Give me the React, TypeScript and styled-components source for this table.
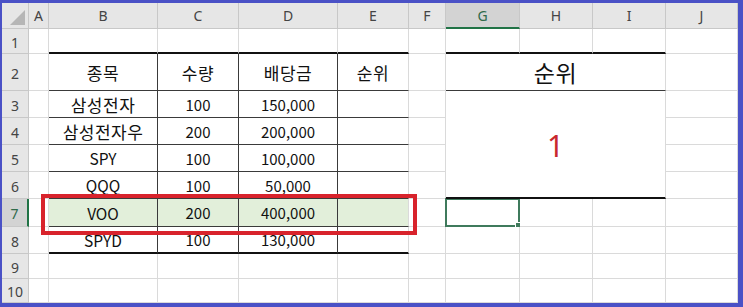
import React from 'react';
import styled, { createGlobalStyle } from 'styled-components';

const GlobalStyle = createGlobalStyle`
  html, body {
    margin: 0;
    padding: 0;
    background: #ffffff;
  }
  body {
    font-family: 'Noto Sans CJK KR', 'Noto Sans', sans-serif;
  }
`;

const COLS = [27, 20, 109, 81, 99, 71, 37, 74, 73, 73, 72];
const ROWS = [26, 25, 37, 27, 27, 27, 27, 28, 27, 25, 24];
const LETTERS = ['A', 'B', 'C', 'D', 'E', 'F', 'G', 'H', 'I', 'J'];

const GRID = '#dadada';
const THIN = '#3a3a3a';
const THICK = '2px solid #111';

const Frame = styled.div`
  width: 743px;
  height: 307px;
  box-sizing: border-box;
  border-style: solid;
  border-color: #4a51c6;
  border-width: 3px 5px 4px 2px;
  position: relative;
  overflow: hidden;
`;

const Sheet = styled.div`
  display: grid;
  grid-template-columns: ${COLS.map((c) => `${c}px`).join(' ')};
  grid-template-rows: ${ROWS.map((r) => `${r}px`).join(' ')};
  background: #fff;
`;

const Corner = styled.div`
  grid-column: 1;
  grid-row: 1;
  background: #e6e6e6;
  border-right: 1px solid #c8c8c8;
  border-bottom: 1px solid #c8c8c8;
  box-sizing: border-box;
  position: relative;
  &::after {
    content: '';
    position: absolute;
    right: 3px;
    bottom: 3px;
    width: 0;
    height: 0;
    border-left: 15px solid transparent;
    border-bottom: 15px solid #b6b6b6;
  }
`;

const ColHead = styled.div<{ $col: number; $active?: boolean }>`
  grid-column: ${(p) => p.$col};
  grid-row: 1;
  box-sizing: border-box;
  display: flex;
  align-items: center;
  justify-content: center;
  font-family: 'Noto Sans', sans-serif;
  font-size: 14px;
  color: ${(p) => (p.$active ? '#2f6a4a' : '#444')};
  background: ${(p) => (p.$active ? '#d3d3d3' : '#e6e6e6')};
  border-right: 1px solid #c8c8c8;
  border-bottom: ${(p) => (p.$active ? '2px solid #217346' : '1px solid #c8c8c8')};
`;

const RowHead = styled.div<{ $row: number; $active?: boolean }>`
  grid-column: 1;
  grid-row: ${(p) => p.$row};
  box-sizing: border-box;
  display: flex;
  align-items: center;
  justify-content: center;
  padding-top: 2px;
  font-family: 'Noto Sans', sans-serif;
  font-size: 14px;
  color: ${(p) => (p.$active ? '#2f6a4a' : '#444')};
  background: ${(p) => (p.$active ? '#d3d3d3' : '#e6e6e6')};
  border-bottom: 1px solid #c8c8c8;
  border-right: ${(p) => (p.$active ? '2px solid #217346' : '1px solid #c8c8c8')};
`;

const Cell = styled.div<{
  $col: number;
  $row: number;
  $span?: number;
  $rspan?: number;
  $bb?: string;
  $br?: string;
  $bg?: string;
}>`
  grid-column: ${(p) => p.$col} / span ${(p) => p.$span ?? 1};
  grid-row: ${(p) => p.$row} / span ${(p) => p.$rspan ?? 1};
  box-sizing: border-box;
  display: flex;
  align-items: center;
  justify-content: center;
  font-size: 15px;
  color: #111;
  background: ${(p) => p.$bg ?? '#fff'};
  border-right: ${(p) => p.$br ?? `1px solid ${GRID}`};
  border-bottom: ${(p) => p.$bb ?? `1px solid ${GRID}`};
  white-space: nowrap;
  position: relative;
`;

const Ko = styled.span<{ $size?: number }>`
  font-size: ${(p) => p.$size ?? 17}px;
  letter-spacing: 0.5px;
`;

const Latin = styled.span`
  font-size: 15.5px;
`;

const RankValue = styled.span`
  font-family: 'Noto Sans', sans-serif;
  font-size: 30px;
  color: #c8282e;
  margin-top: 2px;
`;

const Selection = styled.div`
  position: absolute;
  inset: -1px -1px -1px -1px;
  border: 2px solid #3f7a5c;
  pointer-events: none;
  &::after {
    content: '';
    position: absolute;
    right: -4px;
    bottom: -4px;
    width: 5px;
    height: 5px;
    background: #3f7a5c;
    border: 1px solid #fff;
  }
`;

const Highlight = styled.div`
  position: absolute;
  left: 39px;
  top: 191px;
  width: 376px;
  height: 41px;
  box-sizing: border-box;
  border: 4px solid #d8232c;
  pointer-events: none;
`;

type Row = { row: number; cells: string[]; fill?: string; last?: boolean };

const tableRows: Row[] = [
  { row: 3, cells: ['삼성전자', '100', '150,000', ''] },
  { row: 4, cells: ['삼성전자우', '200', '200,000', ''] },
  { row: 5, cells: ['SPY', '100', '100,000', ''] },
  { row: 6, cells: ['QQQ', '100', '50,000', ''] },
  { row: 7, cells: ['VOO', '200', '400,000', ''], fill: '#e2efda' },
  { row: 8, cells: ['SPYD', '100', '130,000', ''], last: true },
];

const content = (t: string) => {
  if (/[\uac00-\ud7a3]/.test(t)) return <Ko>{t}</Ko>;
  if (/[A-Z]/.test(t)) return <Latin>{t}</Latin>;
  return t;
};

// grid rows: sheet row n sits on grid line n + 1; column B is grid col 3
const gr = (n: number) => n + 1;

export default function App() {
  const cells: React.ReactNode[] = [];

  // empty gridline cells everywhere not covered by the table blocks
  for (let r = 1; r <= 10; r++) {
    for (let c = 1; c <= 10; c++) {
      const inTable = c >= 2 && c <= 5 && r >= 2 && r <= 8;
      const inRank = c >= 7 && c <= 9 && r >= 2 && r <= 6;
      if (inTable || inRank) continue;
      let bb: string | undefined;
      if (r === 1 && ((c >= 2 && c <= 5) || (c >= 7 && c <= 9))) bb = THICK;
      if (r === 8 && c >= 2 && c <= 5) bb = THICK;
      cells.push(
        <Cell key={`e${r}-${c}`} $col={c + 1} $row={gr(r)} $bb={bb}>
          {r === 7 && c === 7 ? <Selection /> : null}
        </Cell>,
      );
    }
  }

  // header row of the table
  ['종목', '수량', '배당금', '순위'].forEach((t, i) => {
    cells.push(
      <Cell
        key={`h${i}`}
        $col={i + 3}
        $row={gr(2)}
        $bb={`1px solid ${THIN}`}
        $br={i < 3 ? `1px solid ${THIN}` : undefined}
      >
        {content(t)}
      </Cell>,
    );
  });

  tableRows.forEach((tr) => {
    tr.cells.forEach((t, i) => {
      cells.push(
        <Cell
          key={`t${tr.row}-${i}`}
          $col={i + 3}
          $row={gr(tr.row)}
          $bg={tr.fill}
          $bb={tr.last ? THICK : `1px solid ${THIN}`}
          $br={i < 3 ? `1px solid ${THIN}` : undefined}
        >
          {content(t)}
        </Cell>,
      );
    });
  });

  return (
    <Frame>
      <GlobalStyle />
      <Sheet>
        <Corner />
        {LETTERS.map((l, i) => (
          <ColHead key={l} $col={i + 2} $active={l === 'G'}>
            {l}
          </ColHead>
        ))}
        {Array.from({ length: 10 }, (_, i) => (
          <RowHead key={i} $row={i + 2} $active={i + 1 === 7}>
            {i + 1}
          </RowHead>
        ))}
        {cells}
        <Cell $col={8} $row={gr(2)} $span={3} $bb={`1px solid ${THIN}`}>
          <Ko $size={23}>순위</Ko>
        </Cell>
        <Cell $col={8} $row={gr(3)} $span={3} $rspan={4} $bb={THICK}>
          <RankValue>1</RankValue>
        </Cell>
      </Sheet>
      <Highlight />
    </Frame>
  );
}
